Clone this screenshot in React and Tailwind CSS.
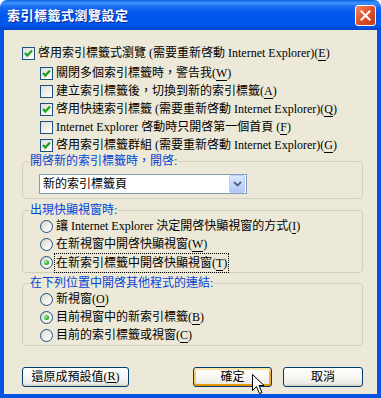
import React from "react";

const Check = ({ checked }) => (
  <span className="w-[13px] h-[13px] shrink-0 border border-[#1c5180] bg-[linear-gradient(135deg,#dcdcd2_0%,#f0efe9_50%,#ffffff_100%)] flex items-center justify-center">
    {checked && (
      <svg width="11" height="11" viewBox="0 0 11 11">
        <path d="M2 5 L4.3 7.6 L9 2.6" fill="none" stroke="#21a121" strokeWidth="2.2" />
      </svg>
    )}
  </span>
);

const Radio = ({ checked }) => (
  <span className="w-[13px] h-[13px] shrink-0 rounded-full border border-[#1c5180] bg-[linear-gradient(135deg,#d6d4ca_0%,#f2f1ec_55%,#ffffff_100%)] flex items-center justify-center">
    {checked && (
      <span className="w-[5px] h-[5px] rounded-full bg-[radial-gradient(circle_at_35%_35%,#a4f0a4_0%,#31b031_60%,#1e8f1e_100%)]" />
    )}
  </span>
);

const K = ({ children }) => <u className="no-underline border-b border-black leading-[11px]">{children}</u>;

const CheckRow = ({ checked, indent, children, className = "" }) => (
  <div className={`flex items-center gap-[3px] h-[18px] ${indent ? "pl-[36px]" : "pl-[18px]"} ${className}`}>
    <Check checked={checked} />
    <span className="whitespace-nowrap">{children}</span>
  </div>
);

const RadioRow = ({ checked, focus, children, className = "h-[18px]" }) => (
  <div className={`flex items-center gap-[2px] pl-[17px] ${className}`}>
    <Radio checked={checked} />
    <span
      className={`whitespace-nowrap px-[1px] ${
        focus ? "outline outline-1 outline-dotted outline-black" : ""
      }`}
    >
      {children}
    </span>
  </div>
);

const Group = ({ title, children, className = "" }) => (
  <fieldset className={`ml-[18px] mr-[14px] border border-[#d0d0bf] rounded-[4px] ${className}`}>
    <legend className="ml-[6px] px-[1px] text-[#0046d5] leading-[14px]">{title}</legend>
    {children}
  </fieldset>
);

const XPButton = ({ children, def, className = "" }) => (
  <button
    className={`h-[20px] rounded-[3px] border border-[#003c74] bg-[linear-gradient(180deg,#ffffff_0%,#f6f6f2_50%,#ecebe5_85%,#d6d0c5_100%)] text-black text-[12px] leading-none flex items-center justify-center ${
      def
        ? "shadow-[inset_0_2px_0_#fde3a6,inset_0_-2px_0_#e59700,inset_2px_0_0_#f9cd6c,inset_-2px_0_0_#f0ac33]"
        : ""
    } ${className}`}
  >
    {children}
  </button>
);

export default function App() {
  return (
    <div className="w-[381px] h-[398px] bg-white font-['Liberation_Serif','Noto_Sans_CJK_TC',serif] text-[12px] text-black">
      <div className="w-full h-full flex flex-col rounded-t-[7px] overflow-hidden">
        {/* title bar */}
        <div className="h-[30px] shrink-0 flex items-center pl-[7px] pr-[5px] bg-[linear-gradient(180deg,#0a5fdc_0%,#3d95ff_10%,#1a6cf3_22%,#0058ee_45%,#0056ea_85%,#0042c8_100%)]">
          <span className="font-['Noto_Sans_CJK_TC',sans-serif] font-bold text-[13px] text-white tracking-[0.5px] [text-shadow:1px_1px_0_#0b2b9c]">
            索引標籤式瀏覽設定
          </span>
          <div className="ml-auto w-[21px] h-[21px] rounded-[3px] border border-white bg-[linear-gradient(135deg,#f08a6a_0%,#e2532e_45%,#c23b17_100%)] flex items-center justify-center">
            <svg width="11" height="11" viewBox="0 0 11 11">
              <path d="M1.5 1.5 L9.5 9.5 M9.5 1.5 L1.5 9.5" stroke="#fff" strokeWidth="2" strokeLinecap="square" />
            </svg>
          </div>
        </div>

        {/* body */}
        <div className="relative flex-1 flex flex-col bg-[#ece9d8] border-x-4 border-b-4 border-[#0553e0] pt-[14px]">
          <CheckRow checked>
            啓用索引標籤式瀏覽 (需要重新啓動 Internet Explorer)(<K>E</K>)
          </CheckRow>
          <CheckRow checked indent className="mt-[2px]">
            關閉多個索引標籤時，警告我(<K>W</K>)
          </CheckRow>
          <CheckRow indent>建立索引標籤後，切換到新的索引標籤(<K>A</K>)</CheckRow>
          <CheckRow checked indent>
            啓用快速索引標籤 (需要重新啓動 Internet Explorer)(<K>Q</K>)
          </CheckRow>
          <CheckRow indent>Internet Explorer 啓動時只開啓第一個首頁 (<K>F</K>)</CheckRow>
          <CheckRow checked indent>
            啓用索引標籤群組 (需要重新啓動 Internet Explorer)(<K>G</K>)
          </CheckRow>

          <Group title="開啓新的索引標籤時，開啓:">
            <div className="pt-[6px] pb-[4px] pl-[16px]">
              <div className="w-[208px] h-[20px] border border-[#7f9db9] bg-white flex items-center">
                <span className="pl-[3px] flex-1">新的索引標籤頁</span>
                <div className="w-[16px] h-[18px] mr-[1px] rounded-[2px] border border-[#b9cdf7] bg-[linear-gradient(180deg,#dde7fd_0%,#c1d3fb_60%,#b0c6f7_100%)] flex items-center justify-center">
                  <svg width="9" height="6" viewBox="0 0 9 6">
                    <path d="M1 1 L4.5 4.5 L8 1" fill="none" stroke="#4d6185" strokeWidth="1.8" />
                  </svg>
                </div>
              </div>
            </div>
          </Group>

          <Group title="出現快顯視窗時:" className="mt-[4px]">
            <RadioRow>
              讓 Internet Explorer 決定開啓快顯視窗的方式(<K>I</K>)
            </RadioRow>
            <RadioRow>在新視窗中開啓快顯視窗(<K>W</K>)</RadioRow>
            <RadioRow checked focus className="h-[19px]">
              在新索引標籤中開啓快顯視窗(<K>T</K>)
            </RadioRow>
          </Group>

          <Group title="在下列位置中開啓其他程式的連結:" className="mt-[3px] pb-[1px]">
            <RadioRow>新視窗(<K>O</K>)</RadioRow>
            <RadioRow checked>目前視窗中的新索引標籤(<K>B</K>)</RadioRow>
            <RadioRow>目前的索引標籤或視窗(<K>C</K>)</RadioRow>
          </Group>

          <div className="flex mt-[21px] pl-[18px]">
            <XPButton className="w-[107px]">
              還原成預設值(<K>R</K>)
            </XPButton>
            <XPButton def className="w-[79px] ml-[64px]">
              確定
            </XPButton>
            <XPButton className="w-[80px] ml-[11px]">取消</XPButton>
          </div>

          {/* mouse pointer */}
          <svg
            className="absolute left-[248px] top-[344px]"
            width="13"
            height="21"
            viewBox="0 0 13 21"
          >
            <path
              d="M0.5 0.5 L0.5 16.5 L4.5 12.5 L7.5 19.5 L10 18.5 L7 11.5 L12 11.5 Z"
              fill="#fff"
              stroke="#000"
              strokeWidth="1"
            />
          </svg>
        </div>
      </div>
    </div>
  );
}
